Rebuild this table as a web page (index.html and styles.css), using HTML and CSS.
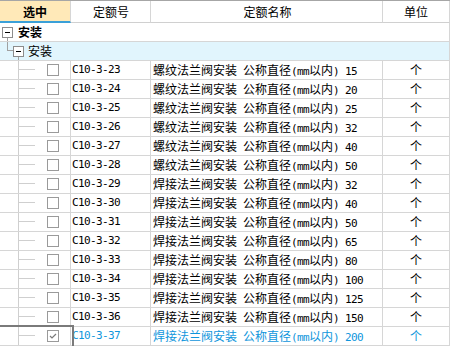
FILE: index.html
```html
<!DOCTYPE html>
<html>
<head>
<meta charset="utf-8">
<link rel="stylesheet" href="styles.css">
</head>
<body>
<div class="grid">
  <div class="row head">
    <div class="cell c1 hsel">选中</div>
    <div class="cell c2 hc">定额号</div>
    <div class="cell c3 hc">定额名称</div>
    <div class="cell c4 hc">单位</div>
  </div>
  <div class="row grp g1">
    <span class="tbox"></span><span class="gtext bold">安装</span>
  </div>
  <div class="row grp g2">
    <span class="conn"></span><span class="tbox"></span><span class="gtext">安装</span>
  </div>

  <div class="row data"><div class="cell c1"><span class="branch"></span><span class="chk"></span></div><div class="cell c2 a">C10-3-23</div><div class="cell c3">螺纹法兰阀安装<span class="a"> </span>公称直径<span class="a">(mm</span>以内<span class="a">) 15</span></div><div class="cell c4 ctr">个</div></div>
  <div class="row data"><div class="cell c1"><span class="branch"></span><span class="chk"></span></div><div class="cell c2 a">C10-3-24</div><div class="cell c3">螺纹法兰阀安装<span class="a"> </span>公称直径<span class="a">(mm</span>以内<span class="a">) 20</span></div><div class="cell c4 ctr">个</div></div>
  <div class="row data"><div class="cell c1"><span class="branch"></span><span class="chk"></span></div><div class="cell c2 a">C10-3-25</div><div class="cell c3">螺纹法兰阀安装<span class="a"> </span>公称直径<span class="a">(mm</span>以内<span class="a">) 25</span></div><div class="cell c4 ctr">个</div></div>
  <div class="row data"><div class="cell c1"><span class="branch"></span><span class="chk"></span></div><div class="cell c2 a">C10-3-26</div><div class="cell c3">螺纹法兰阀安装<span class="a"> </span>公称直径<span class="a">(mm</span>以内<span class="a">) 32</span></div><div class="cell c4 ctr">个</div></div>
  <div class="row data"><div class="cell c1"><span class="branch"></span><span class="chk"></span></div><div class="cell c2 a">C10-3-27</div><div class="cell c3">螺纹法兰阀安装<span class="a"> </span>公称直径<span class="a">(mm</span>以内<span class="a">) 40</span></div><div class="cell c4 ctr">个</div></div>
  <div class="row data"><div class="cell c1"><span class="branch"></span><span class="chk"></span></div><div class="cell c2 a">C10-3-28</div><div class="cell c3">螺纹法兰阀安装<span class="a"> </span>公称直径<span class="a">(mm</span>以内<span class="a">) 50</span></div><div class="cell c4 ctr">个</div></div>
  <div class="row data"><div class="cell c1"><span class="branch"></span><span class="chk"></span></div><div class="cell c2 a">C10-3-29</div><div class="cell c3">焊接法兰阀安装<span class="a"> </span>公称直径<span class="a">(mm</span>以内<span class="a">) 32</span></div><div class="cell c4 ctr">个</div></div>
  <div class="row data"><div class="cell c1"><span class="branch"></span><span class="chk"></span></div><div class="cell c2 a">C10-3-30</div><div class="cell c3">焊接法兰阀安装<span class="a"> </span>公称直径<span class="a">(mm</span>以内<span class="a">) 40</span></div><div class="cell c4 ctr">个</div></div>
  <div class="row data"><div class="cell c1"><span class="branch"></span><span class="chk"></span></div><div class="cell c2 a">C10-3-31</div><div class="cell c3">焊接法兰阀安装<span class="a"> </span>公称直径<span class="a">(mm</span>以内<span class="a">) 50</span></div><div class="cell c4 ctr">个</div></div>
  <div class="row data"><div class="cell c1"><span class="branch"></span><span class="chk"></span></div><div class="cell c2 a">C10-3-32</div><div class="cell c3">焊接法兰阀安装<span class="a"> </span>公称直径<span class="a">(mm</span>以内<span class="a">) 65</span></div><div class="cell c4 ctr">个</div></div>
  <div class="row data"><div class="cell c1"><span class="branch"></span><span class="chk"></span></div><div class="cell c2 a">C10-3-33</div><div class="cell c3">焊接法兰阀安装<span class="a"> </span>公称直径<span class="a">(mm</span>以内<span class="a">) 80</span></div><div class="cell c4 ctr">个</div></div>
  <div class="row data"><div class="cell c1"><span class="branch"></span><span class="chk"></span></div><div class="cell c2 a">C10-3-34</div><div class="cell c3">焊接法兰阀安装<span class="a"> </span>公称直径<span class="a">(mm</span>以内<span class="a">) 100</span></div><div class="cell c4 ctr">个</div></div>
  <div class="row data"><div class="cell c1"><span class="branch"></span><span class="chk"></span></div><div class="cell c2 a">C10-3-35</div><div class="cell c3">焊接法兰阀安装<span class="a"> </span>公称直径<span class="a">(mm</span>以内<span class="a">) 125</span></div><div class="cell c4 ctr">个</div></div>
  <div class="row data"><div class="cell c1"><span class="branch"></span><span class="chk"></span></div><div class="cell c2 a">C10-3-36</div><div class="cell c3">焊接法兰阀安装<span class="a"> </span>公称直径<span class="a">(mm</span>以内<span class="a">) 150</span></div><div class="cell c4 ctr">个</div></div>
  <div class="row data sel"><div class="cell c1 focus"><span class="branch"></span><span class="chk on"><svg width="10" height="10" viewBox="0 0 10 10"><path d="M2 5 L4 7 L8 3" fill="none" stroke="#7a7a7a" stroke-width="1.2"/></svg></span></div><div class="cell c2 a">C10-3-37</div><div class="cell c3">焊接法兰阀安装<span class="a"> </span>公称直径<span class="a">(mm</span>以内<span class="a">) 200</span></div><div class="cell c4 ctr">个</div></div>
</div>
</body>
</html>
```

FILE: styles.css
```css
* { box-sizing: border-box; }
body {
  margin: 0;
  background: #fff;
  font-family: "Noto Sans CJK SC", sans-serif;
  font-size: 12px;
  color: #000;
}
.grid { width: 450px; }
.row {
  display: flex;
  height: 19px;
  border-bottom: 1px solid #d6d6d6;
}
.cell {
  display: block;
  height: 100%;
  border-right: 1px solid #d6d6d6;
  white-space: pre;
  overflow: hidden;
  line-height: 18px;
}
.c1 { width: 71px; display: flex; align-items: center; }
.c2 { width: 80px; padding-left: 1px; }
.c3 { width: 232px; padding-left: 2px; }
.c4 { width: 67px; }
.ctr { text-align: center; }
.a {
  font-family: "DejaVu Sans Mono", monospace;
  font-size: 11px;
  letter-spacing: -0.62px;
}

/* header */
.head {
  height: 23px;
  border-top: 1px solid #a6a6a6;
  border-bottom: none;
}
.head .cell {
  text-align: center;
  justify-content: center;
  border-bottom: 1px solid #d0d0d0;
  line-height: 20px;
  padding-top: 1px;
}
.hsel {
  background: #ffe9b8;
  font-weight: bold;
  border-bottom: 2px solid #3aa0d8 !important;
}

/* group rows */
.grp {
  align-items: center;
  border-right: 1px solid #d6d6d6;
  line-height: 18px;
}
.g1 {
  padding-left: 2px;
  background: linear-gradient(#a0a0a0, #a0a0a0) no-repeat 7px 14px / 1px 4px;
}
.g2 {
  background: linear-gradient(#a0a0a0, #a0a0a0) no-repeat 18px 14px / 1px 4px, #e1f5fd;
  padding-left: 7px;
}
.tbox {
  width: 11px;
  height: 11px;
  border: 1px solid #8c8c8c;
  background: linear-gradient(#000, #000) no-repeat 2px 4px / 5px 1px, #fff;
  flex: none;
}
.conn {
  align-self: flex-start;
  width: 6px;
  height: 9px;
  border-left: 1px solid #a0a0a0;
  border-bottom: 1px solid #a0a0a0;
  flex: none;
}
.g1 .gtext { margin-left: 5px; }
.g2 .gtext { margin-left: 4px; }
.bold { font-weight: bold; }

/* data rows */
.branch {
  align-self: stretch;
  margin-left: 18px;
  width: 17px;
  border-left: 1px solid #cfcfcf;
  background: linear-gradient(#cfcfcf, #cfcfcf) no-repeat 0 8px / 100% 1px;
  flex: none;
}
.chk {
  margin-left: 12px;
  width: 12px;
  height: 12px;
  border: 1px solid #9a9a9a;
  background: #fff;
  flex: none;
  display: flex;
  align-items: center;
  justify-content: center;
}
.sel .c2, .sel .c3, .sel .c4 { color: #0f96dc; }
.focus { position: relative; overflow: visible; }
.focus::after {
  content: "";
  position: absolute;
  left: -2px;
  top: -2px;
  width: 72px;
  height: 20px;
  border: 2px solid #7a7a7a;
}
```
